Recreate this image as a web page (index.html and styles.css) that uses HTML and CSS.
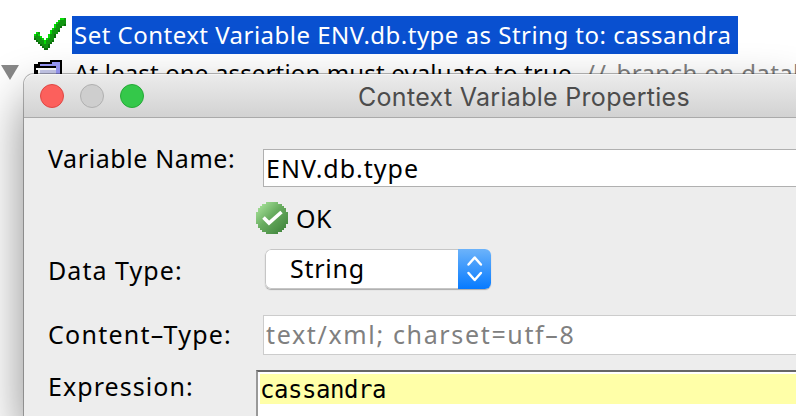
FILE: index.html
```html
<!DOCTYPE html>
<html lang="en">
<head>
<meta charset="utf-8">
<title>Context Variable Properties</title>
<link rel="stylesheet" href="styles.css">
</head>
<body>
<main class="policy">
  <div class="row selected-row">
    <svg class="check" viewBox="0 0 16 16" shape-rendering="crispEdges">
      <path fill="#129512" d="M13 0h3v4h-2v1h-1v2h-1v1h-1v2h-1v2h-1v1h-1v2h-1v1H5v-1H4v-1H3v-1H2v-1H1v-1H0V8h1V7h2v2h1v1h1v1h1v-1h1V8h1V6h1V5h1V3h1V2h1V1h1z"/>
      <path fill="#05dc05" d="M13 0h2v1h-2zM12 1h1v1h-1zM11 2h1v1h-1zM10 3h1v2h-1zM9 5h1v1H9zM8 6h1v2H8zM7 8h1v2H7zM6 10h1v1H6zM5 11h1v2H5zM1 7h1v1H1zM0 8h1v1H0zM2 8h1v1H2zM3 9h1v1H3zM4 10h1v1H4z"/>
      <path fill="#0b700b" d="M15 3h1v1h-1zM13 4h1v1h-1zM12 6h1v1h-1zM10 8h1v2h-1zM9 11h1v1H9zM8 12h1v1H8zM7 13h1v2H7zM5 15h2v1H5zM0 10h1v1H0zM1 11h1v1H1zM2 12h1v1H2zM3 13h1v1H3zM4 14h1v1H4z"/>
    </svg>
    <span class="selection">Set Context Variable ENV.db.type as String to: cassandra</span>
  </div>
  <div class="row branch-row">
    <svg class="arrow" viewBox="0 0 18 15"><path fill="#888" d="M0 0h18L9 15z"/></svg>
    <svg class="folder" viewBox="0 0 14 14" shape-rendering="crispEdges">
      <path d="M8 0h6v12H0V2h2V1h6z"/><path fill="#9999f8" d="M9 1h4v10h-2V3H3V2h6z"/><path fill="#fff" d="M1 4h10v8H2V5H1z"/><path fill="#c7c9eb" d="M3 5h8v7H3z"/>
    </svg>
    <span class="branch">At least one assertion must evaluate to true</span><span class="comment"><span class="slashes">//</span> branch on datab</span>
  </div>
</main>
<section class="window">
  <header class="titlebar">
    <div class="lights"><i class="light red"></i><i class="light gray"></i><i class="light green"></i></div>
    <h1 class="title">Context Variable Properties</h1>
  </header>
  <div class="form">
    <div class="line name-line"><label class="label l-name">Variable Name:</label><div class="field name-field"><span class="v-name">ENV.db.type</span></div></div>
    <div class="status">
      <svg class="ok-icon" viewBox="0 0 32 32">
        <defs><linearGradient id="g" x1="0" y1="0" x2="1" y2="1"><stop offset="0" stop-color="#b4eda6"/><stop offset=".45" stop-color="#69ad60"/><stop offset="1" stop-color="#397d36"/></linearGradient></defs>
        <path shape-rendering="crispEdges" fill="url(#g)" d="M10 0h12v2h4v2h2v2h2v4h2v12h-2v4h-2v2h-2v2h-4v2H10v-2H6v-2H4v-2H2v-4H0V10h2V6h2V4h2V2h4z"/>
        <path fill="none" stroke="#fff" stroke-width="3.600" d="M7.500 15.500l5.500 5.500L25.500 10"/>
      </svg>
      <span class="ok">OK</span>
    </div>
    <div class="line type-line"><label class="label l-type">Data Type:</label>
      <div class="select"><span class="choice">String</span><div class="stepper"><svg viewBox="0 0 33 40"><path fill="none" stroke="#fff" stroke-width="2.500" stroke-linecap="round" stroke-linejoin="round" d="M10.500 15.500l6.200-7 6.200 7M10.500 24l6.200 7 6.200-7"/></svg></div></div>
    </div>
    <div class="line content-line"><label class="label l-content">Content–Type:</label><div class="field content-field"><span class="v-content">text/xml; charset=utf–8</span></div></div>
    <div class="line expr-line"><label class="label l-expr">Expression:</label><div class="editor"><div class="code">cassandra</div></div></div>
  </div>
</section>
</body>
</html>
```
FILE: styles.css
```css
* { box-sizing: border-box; }
html { overflow: hidden; }
body {
  margin: 0;
  width: 796px;
  height: 416px;
  overflow: hidden;
  position: relative;
  background: #fff;
  color: #000;
  font: 25px/38px "Noto Sans", sans-serif;
  white-space: nowrap;
}
svg { display: block; flex: none; }
.policy { padding-top: 16px; }
.row { display: flex; height: 38px; font-size: 24px; overflow: hidden; }
.selected-row { padding-left: 34px; }
.check { width: 32px; height: 32px; margin: 2px 6px 0 0; }
.selection { width: 666px; padding-left: 2px; background: #0950d0; color: #fff; letter-spacing: 0.48px; }
.arrow { width: 18px; height: 15px; margin: 11px 14px 0 1px; }
.folder { width: 28px; height: 28px; margin: 6px 12px 0 1px; }
.branch { flex: none; letter-spacing: 0.15px; width: 512px; }
.comment { flex: none; color: #808080; letter-spacing: 0.4px; }
.slashes { letter-spacing: 2px; margin-right: 2px; }
.window {
  position: absolute;
  left: 24px;
  top: 74px;
  width: 772px;
  height: 342px;
  border-radius: 10px 0 0 0;
  background: #ededed;
  box-shadow: 0 0 0 1px rgba(0,0,0,.28), 0 24px 50px rgba(0,0,0,.48);
}
.titlebar {
  display: flex;
  align-items: center;
  height: 44px;
  border-bottom: 1px solid #aaa;
  border-radius: 10px 0 0 0;
  background: linear-gradient(#ececec, #d2d2d2);
  box-shadow: inset 0 1px #f6f6f6;
}
.lights { display: flex; gap: 16px; padding-left: 16px; width: 334px; }
.light { width: 24px; height: 24px; border-radius: 50%; border: 1px solid; }
.red { background: #fc605c; border-color: #df4744; }
.gray { background: #cecece; border-color: #b0b0b0; }
.green { background: #34c84a; border-color: #25a936; }
.title { margin: 2px 0 0; font: 400 25px/38px Inter, sans-serif; color: #4c4c4c; letter-spacing: 0.3px; }
.form { display: flex; flex-direction: column; padding-left: 24px; height: 298px; overflow: hidden; }
.line { display: flex; flex: none; }
.label { line-height: 34px; flex: none; }
.l-name { letter-spacing: 0.6px; }
.l-type, .l-expr { letter-spacing: 1.05px; }
.l-content { letter-spacing: 1.25px; }
.name-line { padding-top: 31px; }
.name-line .label { width: 215px; margin-top: -8px; }
.field { flex: 1; border: 1px solid #b0b0b0; border-right: 0; background: #fff; padding-left: 2px; }
.name-field { height: 38px; line-height: 37px; letter-spacing: 1px; }
.status { display: flex; flex: none; align-items: center; height: 32px; margin: 15px 0 0 208px; }
.ok-icon { width: 32px; height: 32px; margin-right: 8px; }
.ok { letter-spacing: 0.5px; }
.type-line { margin-top: 15px; height: 40px; }
.type-line .label { width: 217px; margin-top: 4px; }
.select { display: flex; width: 226px; height: 40px; border-radius: 6px; background: #fff; overflow: hidden; box-shadow: 0 1px 1px #aaa; }
.choice { width: 193px; padding-left: 24px; line-height: 37px; letter-spacing: 0.75px; border: 1px solid #c6c6c6; border-right: 0; border-radius: 6px 0 0 6px; }
.stepper { width: 33px; background: linear-gradient(#6cb3fa, #067aff); }
.content-line { margin-top: 26px; height: 40px; }
.content-line .label { width: 215px; margin-top: 2px; }
.content-field { height: 40px; border-color: #ccc; color: #808080; line-height: 37px; letter-spacing: 1.65px; }
.expr-line { margin-top: 15px; height: 46px; }
.expr-line .label { width: 208px; margin-top: -1px; }
.editor { flex: 1; height: 46px; border: 2px solid #999; border-top-color: #666; border-right: 0; border-bottom: 0; padding: 2px 0 0 2px; background: #fff; }
.code { height: 30px; background: #ffffa8; font: 24px/32px "DejaVu Sans Mono", monospace; letter-spacing: -0.45px; }
```
